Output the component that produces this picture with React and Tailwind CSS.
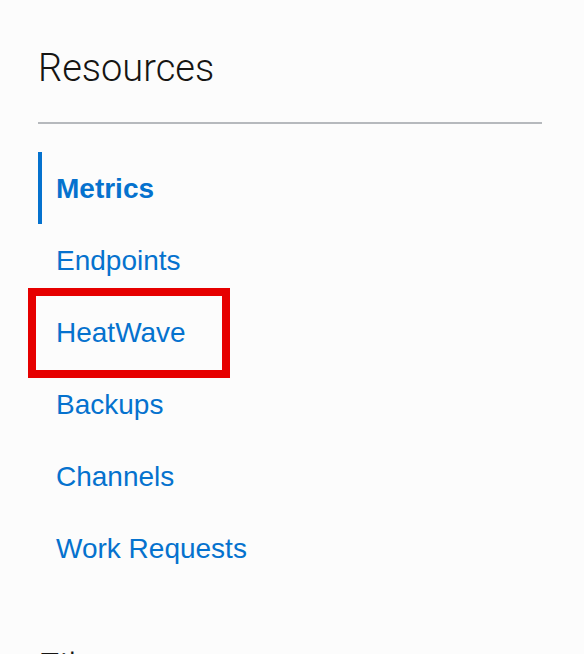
const items = ['Metrics', 'Endpoints', 'HeatWave', 'Backups', 'Channels', 'Work Requests']

export default function App() {
  return (
    <div className="h-[654px] w-[584px] overflow-hidden bg-[#fcfcfc] pl-[38px] pr-[42px] pt-[49px] font-['Liberation_Sans',Arial,sans-serif]">
      <h2 className="font-['Roboto',sans-serif] text-[38px] font-light leading-[38px] text-[#161513]">Resources</h2>
      <div className="mt-[35px] h-[2px] bg-[#b6b9bd]" />

      <ul className="relative mt-[28px]">
        {items.map((name, i) => (
          <li
            key={name}
            className={
              i === 0
                ? 'h-[72px] border-l-4 border-[#0572ce] pl-[14px] text-[28px] font-bold leading-[73px] text-[#0572ce]'
                : 'h-[72px] border-l-4 border-transparent pl-[14px] text-[28px] leading-[73px] text-[#0572ce]'
            }
          >
            {name}
          </li>
        ))}
        {/* annotation around HeatWave */}
        <div className="pointer-events-none absolute left-[-10px] top-[136px] h-[90px] w-[202px] border-[8px] border-[#e60000]" />
      </ul>

      <h2 className="mt-[65px] font-['Roboto',sans-serif] text-[38px] font-light leading-[38px] text-[#161513]">Filters</h2>
    </div>
  )
}
